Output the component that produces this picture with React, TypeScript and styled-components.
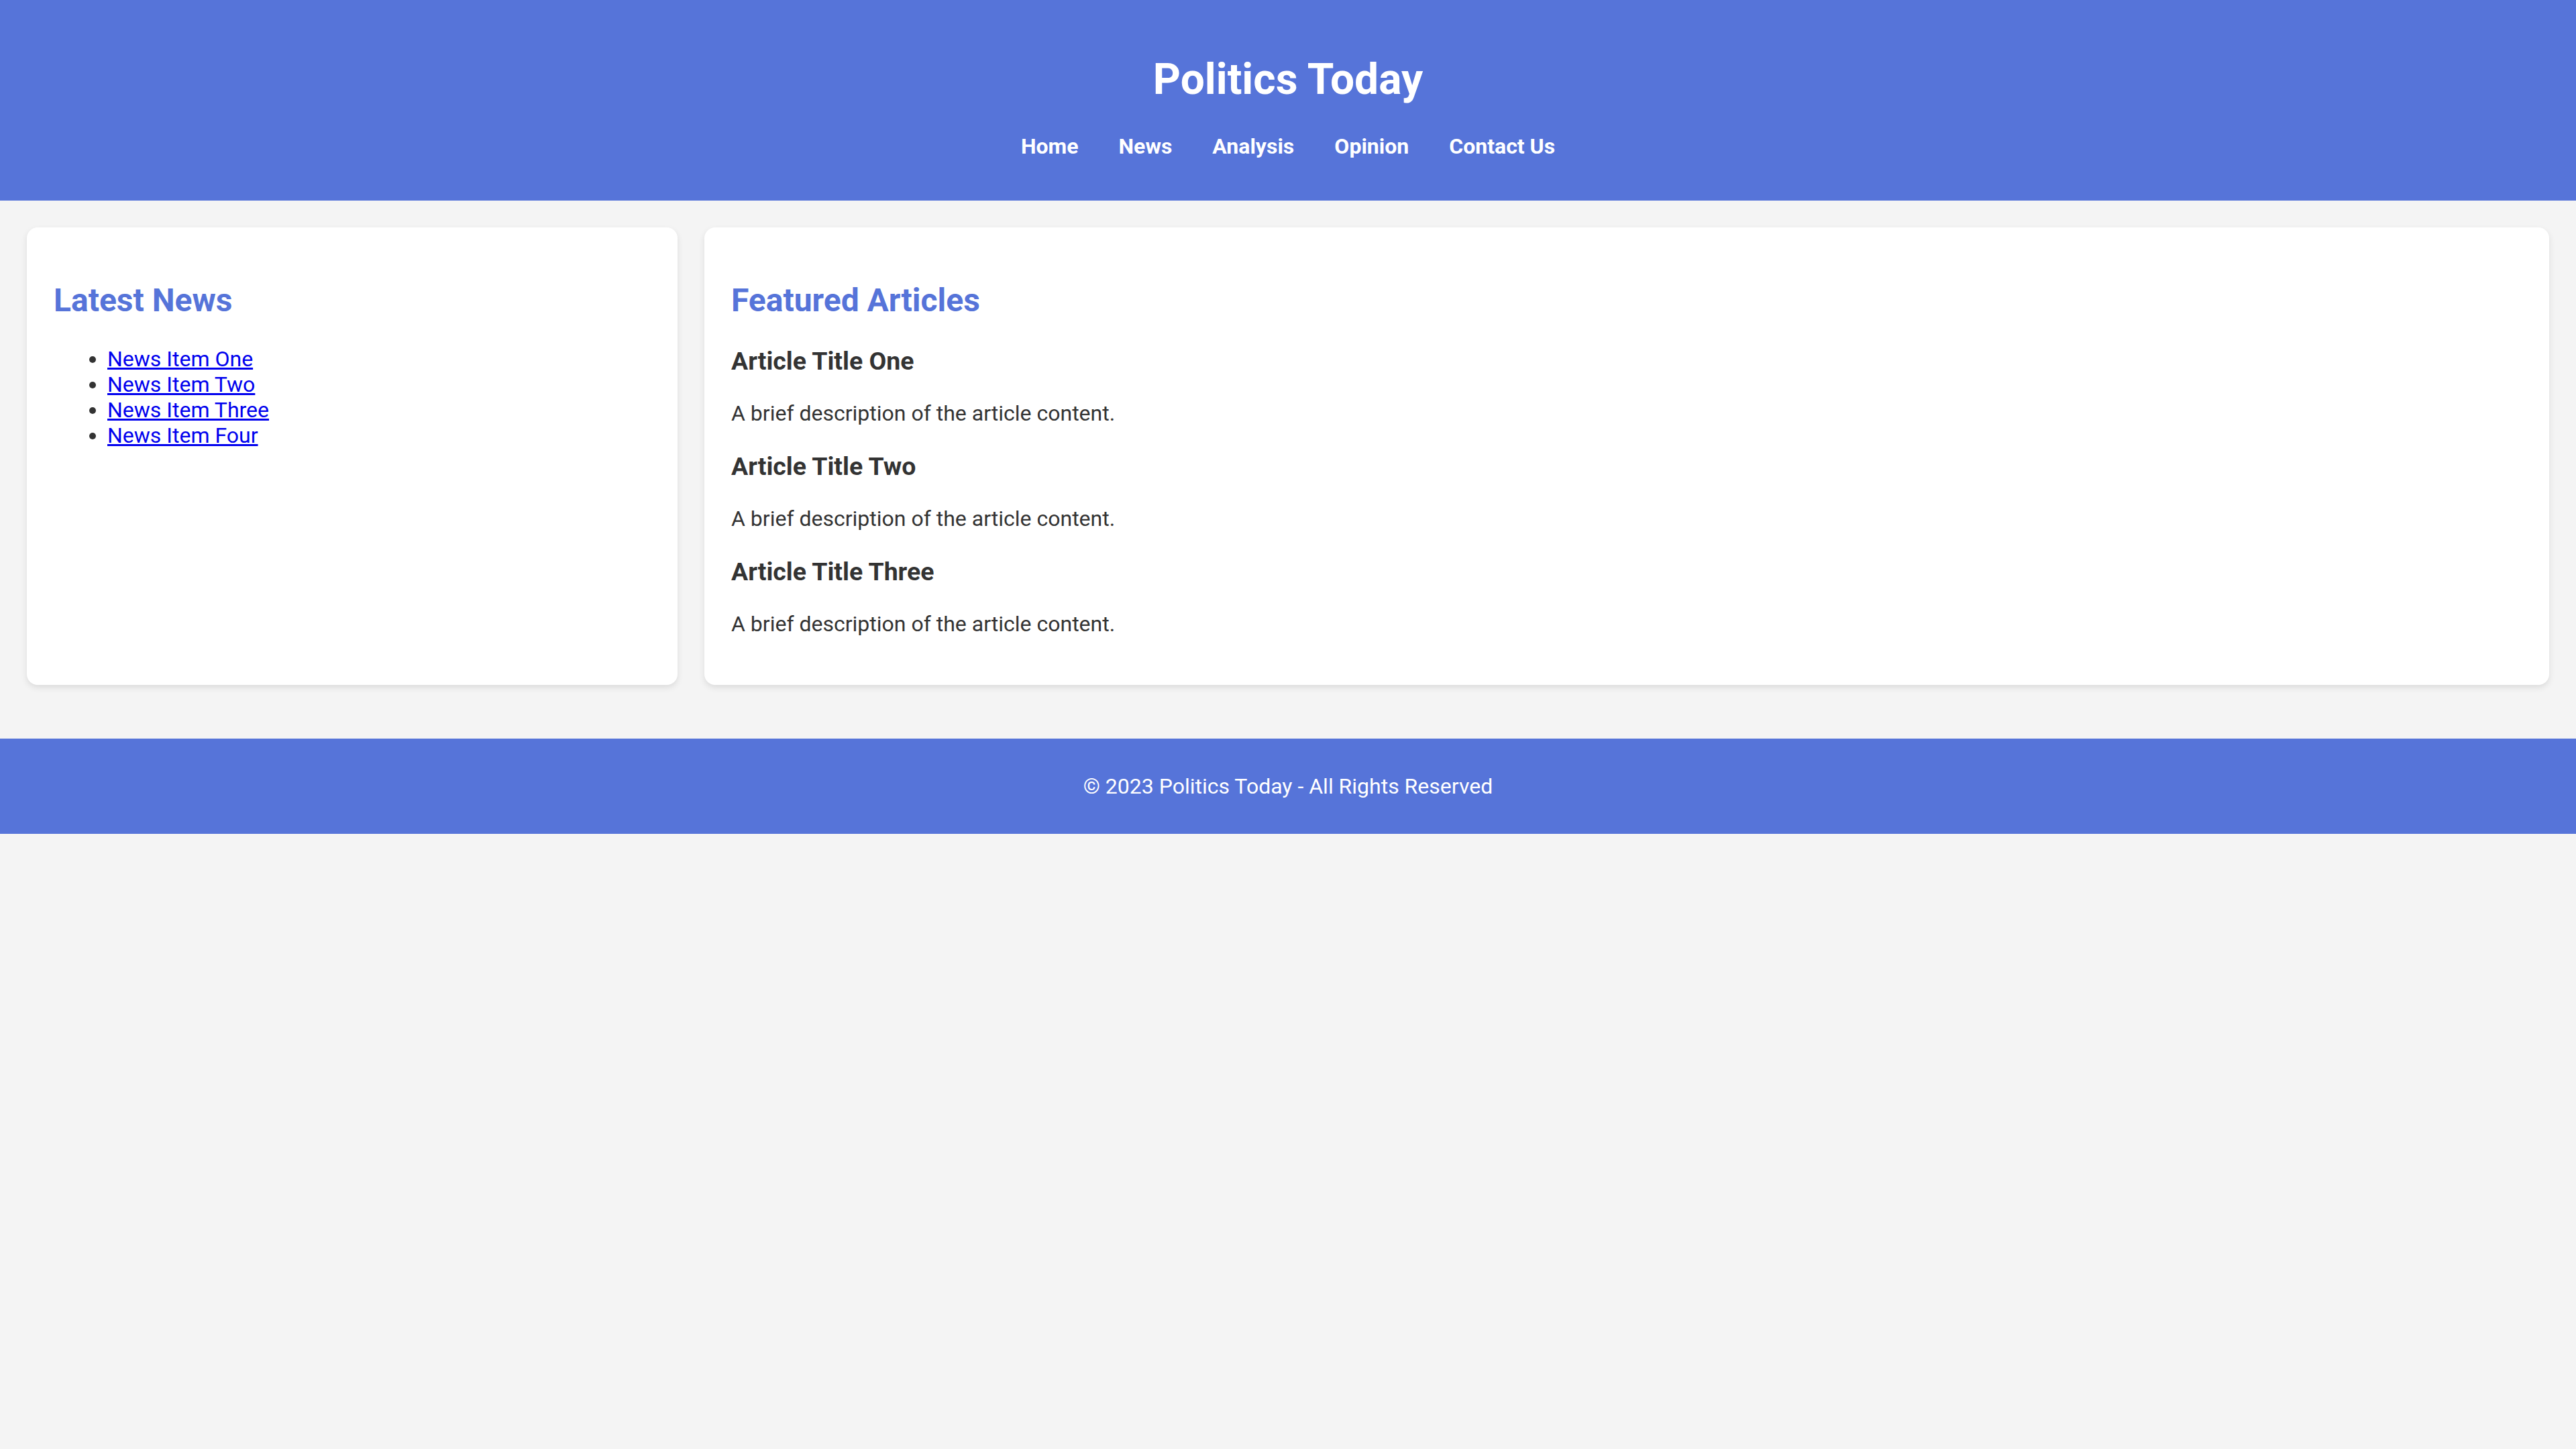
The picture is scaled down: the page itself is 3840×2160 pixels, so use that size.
import React from "react";
import styled, { createGlobalStyle } from "styled-components";

const BRAND = "#5674d9";

const GlobalStyle = createGlobalStyle`
  html, body {
    margin: 0;
    padding: 0;
  }
  body {
    font-family: Roboto, "Liberation Sans", Arial, sans-serif;
    font-size: 32px;
    color: #333;
    background: #f4f4f4;
  }
`;

const Header = styled.header`
  background: ${BRAND};
  color: #fff;
  text-align: center;
  padding: 40px 0 62px;
`;

const SiteTitle = styled.h1`
  margin: 41px 0 43px;
  font-size: 64px;
  line-height: 75px;
  font-weight: 700;
`;

const NavList = styled.ul`
  list-style: none;
  margin: 0;
  padding: 0;
  display: flex;
  justify-content: center;
  line-height: 38px;
`;

const NavItem = styled.li`
  margin: 0 30px;
`;

const NavLink = styled.a`
  color: #fff;
  text-decoration: none;
  font-weight: 700;
  font-size: 32px;
`;

const Main = styled.main`
  display: flex;
  gap: 40px;
  padding: 40px;
`;

const Card = styled.section<{ $grow: number }>`
  flex: ${(p) => p.$grow} 1 0;
  background: #fff;
  padding: 40px;
  border-radius: 16px;
  box-shadow: 0 4px 10px rgba(0, 0, 0, 0.1);
  min-width: 0;
`;

const CardTitle = styled.h2`
  margin: 40px 0;
  font-size: 48px;
  font-weight: 700;
  color: ${BRAND};
`;

const NewsList = styled.ul`
  margin: 32px 0;
  padding-left: 80px;
  list-style: disc;
`;

const NewsItem = styled.li`
  font-size: 32px;
`;

const NewsLink = styled.a`
  color: #0000ee;
  text-decoration: underline;
`;

const ArticleTitle = styled.h3`
  margin: 37.44px 0;
  font-size: 37.44px;
  font-weight: 700;
  color: #333;
`;

const ArticleText = styled.p`
  margin: 32px 0;
  font-size: 32px;
  color: #333;
`;

const Footer = styled.footer`
  background: ${BRAND};
  color: #fff;
  text-align: center;
  padding: 20px;
  margin-top: 40px;
`;

const FooterText = styled.p`
  margin: 32px 0;
  font-size: 32px;
`;

const navItems = ["Home", "News", "Analysis", "Opinion", "Contact Us"];
const news = ["News Item One", "News Item Two", "News Item Three", "News Item Four"];
const articles = ["Article Title One", "Article Title Two", "Article Title Three"];

export default function App() {
  return (
    <>
      <GlobalStyle />
      <Header>
        <SiteTitle>Politics Today</SiteTitle>
        <nav>
          <NavList>
            {navItems.map((n) => (
              <NavItem key={n}>
                <NavLink href="#">{n}</NavLink>
              </NavItem>
            ))}
          </NavList>
        </nav>
      </Header>
      <Main>
        <Card $grow={1}>
          <CardTitle>Latest News</CardTitle>
          <NewsList>
            {news.map((n) => (
              <NewsItem key={n}>
                <NewsLink href="#">{n}</NewsLink>
              </NewsItem>
            ))}
          </NewsList>
        </Card>
        <Card $grow={3}>
          <CardTitle>Featured Articles</CardTitle>
          {articles.map((a) => (
            <article key={a}>
              <ArticleTitle>{a}</ArticleTitle>
              <ArticleText>A brief description of the article content.</ArticleText>
            </article>
          ))}
        </Card>
      </Main>
      <Footer>
        <FooterText>© 2023 Politics Today - All Rights Reserved</FooterText>
      </Footer>
    </>
  );
}
